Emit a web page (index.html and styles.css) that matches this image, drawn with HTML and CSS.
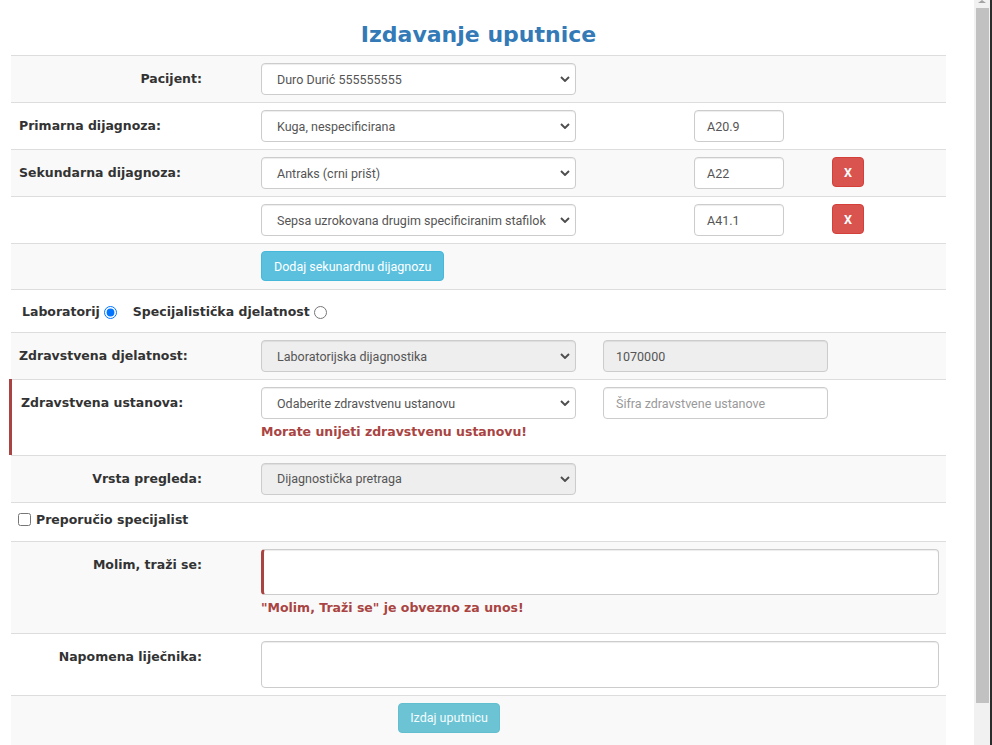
FILE: index.html
```html
<!DOCTYPE html>
<html lang="hr">
<head>
<meta charset="utf-8">
<title>Izdavanje uputnice</title>
<link rel="stylesheet" href="styles.css">
</head>
<body>
<div class="page">
  <h1 class="title">Izdavanje uputnice</h1>
  <div class="form">
    <div class="row odd">
      <label class="lbl lbl-right">Pacijent:</label>
      <div class="fields">
        <div class="sel"><select class="ctl"><option>Duro Durić 555555555</option></select><svg class="chev" viewBox="0 0 10 6"><path d="M1 1l4 4 4-4"/></svg></div>
      </div>
    </div>
    <div class="row">
      <label class="lbl">Primarna dijagnoza:</label>
      <div class="fields">
        <div class="sel"><select class="ctl"><option>Kuga, nespecificirana</option></select><svg class="chev" viewBox="0 0 10 6"><path d="M1 1l4 4 4-4"/></svg></div>
        <input class="ctl code" value="A20.9">
      </div>
    </div>
    <div class="row odd">
      <label class="lbl">Sekundarna dijagnoza:</label>
      <div class="fields">
        <div class="sel"><select class="ctl"><option>Antraks (crni prišt)</option></select><svg class="chev" viewBox="0 0 10 6"><path d="M1 1l4 4 4-4"/></svg></div>
        <input class="ctl code" value="A22">
        <button class="btn btn-x" type="button">X</button>
      </div>
    </div>
    <div class="row">
      <label class="lbl"></label>
      <div class="fields">
        <div class="sel"><select class="ctl"><option>Sepsa uzrokovana drugim specificiranim stafilokokom</option></select><svg class="chev" viewBox="0 0 10 6"><path d="M1 1l4 4 4-4"/></svg></div>
        <input class="ctl code" value="A41.1">
        <button class="btn btn-x" type="button">X</button>
      </div>
    </div>
    <div class="row odd row-btn">
      <label class="lbl"></label>
      <div class="fields">
        <button class="btn btn-info" type="button">Dodaj sekunardnu dijagnozu</button>
      </div>
    </div>
    <div class="row choice">
      <label class="opt">Laboratorij <input type="radio" name="vrsta" checked></label>
      <label class="opt">Specijalistička djelatnost <input type="radio" name="vrsta"></label>
    </div>
    <div class="row odd">
      <label class="lbl">Zdravstvena djelatnost:</label>
      <div class="fields">
        <div class="sel"><select class="ctl" disabled><option>Laboratorijska dijagnostika</option></select><svg class="chev" viewBox="0 0 10 6"><path d="M1 1l4 4 4-4"/></svg></div>
        <input class="ctl code-wide" value="1070000" disabled>
      </div>
    </div>
    <div class="row has-err">
      <label class="lbl lbl-err">Zdravstvena ustanova:</label>
      <div class="fields">
        <div class="stack">
          <div class="sel"><select class="ctl"><option>Odaberite zdravstvenu ustanovu</option></select><svg class="chev" viewBox="0 0 10 6"><path d="M1 1l4 4 4-4"/></svg></div>
          <p class="err">Morate unijeti zdravstvenu ustanovu!</p>
        </div>
        <input class="ctl code-wide" placeholder="Šifra zdravstvene ustanove">
      </div>
    </div>
    <div class="row odd">
      <label class="lbl lbl-right">Vrsta pregleda:</label>
      <div class="fields">
        <div class="sel"><select class="ctl" disabled><option>Dijagnostička pretraga</option></select><svg class="chev" viewBox="0 0 10 6"><path d="M1 1l4 4 4-4"/></svg></div>
      </div>
    </div>
    <div class="row check">
      <label class="opt"><input type="checkbox"> Preporučio specijalist</label>
    </div>
    <div class="row odd">
      <label class="lbl lbl-right">Molim, traži se:</label>
      <div class="fields">
        <div class="stack">
          <textarea class="ctl ta ta-err"></textarea>
          <p class="err err-ta">"Molim, Traži se" je obvezno za unos!</p>
        </div>
      </div>
    </div>
    <div class="row">
      <label class="lbl lbl-right">Napomena liječnika:</label>
      <div class="fields">
        <textarea class="ctl ta ta-tall"></textarea>
      </div>
    </div>
    <div class="row odd row-last">
      <button class="btn btn-submit" type="button">Izdaj uputnicu</button>
    </div>
  </div>
</div>
<div class="scrollbar"><span class="sb-arrow"></span><span class="sb-thumb"></span></div>
</body>
</html>
```

FILE: styles.css
```css
* { box-sizing: border-box; }
html, body { margin: 0; overflow: hidden; background: #fff; }
body { font-family: "DejaVu Sans", Verdana, sans-serif; color: #333; }

.page { width: 935px; margin-left: 11px; }

.title {
  margin: 0;
  padding: 19px 0 5px;
  font: bold 22px/31px "DejaVu Sans", Verdana, sans-serif;
  color: #337ab7;
  text-align: center;
}

.row {
  display: flex;
  align-items: flex-start;
  border-top: 1px solid #ddd;
  padding: 7px 0;
}
.row.odd { background: #f9f9f9; }
.row-btn { padding-bottom: 8px; }

.lbl {
  flex: 0 0 250px;
  padding: 7px 8px 0;
  font-weight: bold;
  font-size: 12.5px;
  line-height: 17.86px;
  color: #333;
}
.lbl-right { text-align: right; padding-right: 59px; }
.lbl-err { padding-left: 10px; }

.has-err { position: relative; }
.has-err::before {
  content: "";
  position: absolute;
  left: -2px;
  top: -1px;
  bottom: 0;
  width: 3px;
  background: #a94442;
}

.fields { display: flex; align-items: flex-start; }
.stack { display: flex; flex-direction: column; }

.ctl {
  height: 32px;
  border: 1px solid #ccc;
  border-radius: 4px;
  background: #fff;
  font: 12.5px Roboto, sans-serif;
  color: #555;
  padding: 0 12px;
  box-shadow: inset 0 1px 1px rgba(0,0,0,.075);
  outline: none;
}
.ctl:disabled { background: #eee; color: #555; opacity: 1; }
.ctl::placeholder { color: #999; }

.sel { position: relative; width: 315px; height: 32px; }
.sel select {
  width: 100%;
  -webkit-appearance: none;
  appearance: none;
  padding: 0 29px 0 15px;
}
.chev {
  position: absolute;
  right: 6px;
  top: 13px;
  width: 10px;
  height: 6px;
  fill: none;
  stroke: #4d4d4d;
  stroke-width: 1.9;
  pointer-events: none;
}

.code { width: 90px; margin-left: 118px; }
.code-wide { width: 225px; margin-left: 27px; }

.btn {
  height: 30px;
  border-radius: 4px;
  font: 12.5px Roboto, sans-serif;
  color: #fff;
  padding: 0 12px;
  white-space: nowrap;
  cursor: pointer;
}
.btn-x {
  width: 32px;
  margin-left: 48px;
  padding: 0;
  background: #d9534f;
  border: 1px solid #d43f3a;
  font-weight: bold;
  font-size: 12.5px;
}
.btn-info {
  background: #5bc0de;
  border: 1px solid #46b8da;
}
.btn-submit {
  margin-left: 387px;
  width: 102px;
  padding: 0;
  background: #6bc3d3;
  border: 1px solid #62bfd0;
  color: #f4fbfd;
}
.row-last { padding-bottom: 20px; }

.choice {
  padding: 12px 0 10px 11px;
  align-items: center;
}
.check {
  padding: 7px 0 11px 7px;
  align-items: center;
}
.opt {
  display: flex;
  align-items: center;
  font-weight: bold;
  font-size: 12.5px;
  line-height: 20px;
  color: #333;
}
.opt input[type="radio"] { margin: 0 16px 0 4px; width: 13px; height: 13px; }
.opt input[type="checkbox"] { margin: 0 5px 0 0; width: 13px; height: 13px; }

.ta {
  display: block;
  width: 678px;
  height: 46px;
  resize: none;
  padding: 6px 12px;
}
.ta-tall { height: 47px; }
.ta-err { border-left: 3px solid #a94442; }

.err {
  margin: 4px 0 7px;
  color: #a94442;
  font-weight: bold;
  font-size: 12.5px;
  line-height: 17.86px;
}
.err-ta { margin-bottom: 9px; }

.scrollbar {
  position: fixed;
  top: 0;
  right: 0;
  width: 18px;
  height: 745px;
  background: #f1f1f1;
  border-right: 2px solid #2b2b2b;
}
.sb-thumb {
  position: absolute;
  left: 2px;
  top: 8px;
  width: 13px;
  height: 695px;
  background: #c1c1c1;
}
.sb-arrow {
  position: absolute;
  left: 4px;
  top: 0;
  width: 0;
  height: 0;
  border-left: 4px solid transparent;
  border-right: 4px solid transparent;
  border-bottom: 3px solid #a3a3a3;
}
```
